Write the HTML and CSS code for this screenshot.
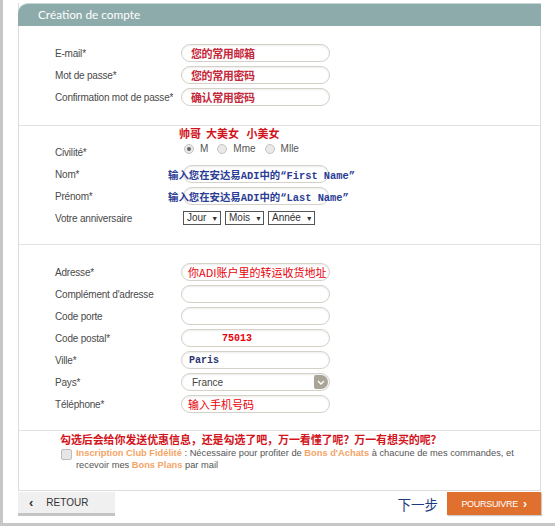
FILE: index.html
```html
<!doctype html>
<html>
  <head>
    <meta charset="UTF-8" />
    <title>Création de compte</title>
    <link rel="stylesheet" href="styles.css">
  </head>
  <body>
    <div id="page">
      <div id="panel">
        <div class="head">Création de compte</div>

        <!-- identifiants -->
        <div class="section s1">
          <div class="row">
            <span class="label">E-mail*</span>
            <div class="field"><span class="hint-red">您的常用邮箱</span></div>
          </div>
          <div class="row">
            <span class="label">Mot de passe*</span>
            <div class="field"><span class="hint-red">您的常用密码</span></div>
          </div>
          <div class="row">
            <span class="label">Confirmation mot de passe*</span>
            <div class="field"><span class="hint-red">确认常用密码</span></div>
          </div>
        </div>

        <!-- identite -->
        <div class="section s2">
          <div class="note">帅哥&nbsp;&nbsp;大美女&nbsp;&nbsp;&nbsp;小美女</div>
          <div class="row">
            <span class="label">Civilité*</span>
            <div class="radios">
              <span class="radio checked"></span><span class="rlabel">M</span>
              <span class="radio"></span><span class="rlabel">Mme</span>
              <span class="radio"></span><span class="rlabel">Mlle</span>
            </div>
          </div>
          <div class="row">
            <span class="label">Nom*</span>
            <div class="field narrow"><span class="hint-blue">输入您在安达易ADI中的“First Name”</span></div>
          </div>
          <div class="row">
            <span class="label">Prénom*</span>
            <div class="field narrow"><span class="hint-blue">输入您在安达易ADI中的“Last Name”</span></div>
          </div>
          <div class="row">
            <span class="label">Votre anniversaire</span>
            <div class="selects">
              <span class="sel w1">Jour <i>▼</i></span>
              <span class="sel w2">Mois <i>▼</i></span>
              <span class="sel w3">Année <i>▼</i></span>
            </div>
          </div>
        </div>

        <!-- adresse -->
        <div class="section s3">
          <div class="row">
            <span class="label">Adresse*</span>
            <div class="field"><span class="hint-addr">你ADI账户里的转运收货地址</span></div>
          </div>
          <div class="row">
            <span class="label">Complément d'adresse</span>
            <div class="field"></div>
          </div>
          <div class="row">
            <span class="label">Code porte</span>
            <div class="field"></div>
          </div>
          <div class="row">
            <span class="label">Code postal*</span>
            <div class="field"><span class="mono red zip">75013</span></div>
          </div>
          <div class="row">
            <span class="label">Ville*</span>
            <div class="field"><span class="mono navy">Paris</span></div>
          </div>
          <div class="row">
            <span class="label">Pays*</span>
            <div class="field dropdown">
              <span class="country">France</span>
              <span class="drop-btn">
                <svg width="8" height="5" viewBox="0 0 8 5"><path d="M1 1 L4 4 L7 1" fill="none" stroke="#fff" stroke-width="1.4"/></svg>
              </span>
            </div>
          </div>
          <div class="row">
            <span class="label">Téléphone*</span>
            <div class="field"><span class="hint-addr">输入手机号码</span></div>
          </div>
        </div>

        <!-- newsletter -->
        <div class="section s4">
          <div class="promo">勾选后会给你发送优惠信息，还是勾选了吧，万一看懂了呢？万一有想买的呢？</div>
          <div class="club">
            <span class="check"></span>
            <p>
              <b>Inscription Club Fidélité</b> : Nécessaire pour profiter de <b>Bons d'Achats</b> à chacune de mes commandes, et recevoir mes <b>Bons Plans</b> par mail
            </p>
          </div>
        </div>
      </div>

      <div class="actions">
        <a class="back"><span class="chev">‹</span>RETOUR</a>
        <div class="go">
          <span class="next">下一步</span>
          <a class="submit">POURSUIVRE <span class="chev-r">›</span></a>
        </div>
      </div>
    </div>
  </body>
</html>
```

FILE: styles.css
```css
* {
  padding: 0px;
  margin: 0px;
  text-decoration: none;
}
body {
  background: #fff;
  font-family: "Liberation Sans", Arial, sans-serif;
  color: #4a4a4a;
}
#page {
  height: 526px;
  box-sizing: border-box;
  border-left: 3px solid #c6c6c6;
  border-bottom: 3px solid #c6c6c6;
  padding: 3px 0 0 15px;
}
#panel {
  width: 523px;
  box-sizing: border-box;
  border-left: 1px solid #dcdcdc;
  border-right: 1px solid #dcdcdc;
  border-bottom: 1px solid #dcdcdc;
}
.head {
  height: 23px;
  margin: 0 -1px;
  background: #8eabab;
  border-top: 1px solid #c9d6d6;
  border-radius: 10px 0 0 0;
  box-sizing: border-box;
  color: #fff;
  font-family: Lato, "Liberation Sans", sans-serif;
  font-size: 11.8px;
  line-height: 21px;
  padding-left: 20px;
}
.section {
  padding-left: 36px;
  border-bottom: 1px solid #e2e2e2;
}
.s1 {
  padding-top: 16px;
  padding-bottom: 17px;
}
.s2 {
  padding-bottom: 15px;
}
.s3 {
  padding-top: 16px;
  padding-bottom: 15px;
}
.s4 {
  height: 59px;
  border-bottom: none;
  padding-left: 41px;
}
.row {
  display: flex;
  align-items: center;
  height: 22px;
}
.label {
  width: 126px;
  font-size: 10px;
  letter-spacing: -0.2px;
  flex: none;
}
.field {
  width: 149px;
  height: 18px;
  box-sizing: border-box;
  border: 1px solid #d4d1c8;
  border-radius: 9px;
  box-shadow: inset 0 1px 2px rgba(0, 0, 0, 0.08);
  display: flex;
  align-items: center;
  padding-left: 6px;
  white-space: nowrap;
}
.field.narrow {
  width: 146px;
  margin-left: 2px;
}
.hint-red {
  margin-left: 3px;
  color: #c4283a;
  font-family: "Noto Sans CJK SC", sans-serif;
  font-size: 11px;
  font-weight: bold;
  letter-spacing: -0.4px;
}
.hint-blue {
  margin-left: -22px;
  color: #2a3c94;
  font-family: "Liberation Mono", "Noto Sans CJK SC", monospace;
  font-size: 10.4px;
  font-weight: bold;
}
.hint-addr {
  color: #e8000b;
  font-family: "Noto Sans CJK SC", sans-serif;
  font-size: 11px;
}
.mono {
  font-family: "Liberation Mono", monospace;
  font-size: 10px;
  font-weight: bold;
}
.red {
  color: #e8000b;
}
.zip {
  margin-left: 34px;
}
.navy {
  color: #2b3570;
  margin-left: 1px;
}
.dropdown {
  padding-left: 10px;
  padding-right: 1px;
  justify-content: space-between;
}
.country {
  font-size: 10px;
  color: #444;
}
.drop-btn {
  width: 14px;
  height: 14px;
  background: #a9a497;
  border-radius: 2px 7px 7px 2px;
  display: flex;
  align-items: center;
  justify-content: center;
}
.note {
  height: 15px;
  line-height: 15px;
  padding-left: 124px;
  color: #d2141c;
  font-family: "Noto Sans CJK SC", serif;
  font-size: 11px;
  font-weight: bold;
}
.radios {
  display: flex;
  align-items: center;
  padding-left: 3px;
  padding-bottom: 7px;
  font-size: 10px;
  color: #555;
}
.radio {
  width: 8px;
  height: 8px;
  border: 1px solid #c3c3c3;
  border-radius: 50%;
  background: #e9e9e9;
  position: relative;
}
.radio.checked::after {
  content: "";
  position: absolute;
  left: 2px;
  top: 2px;
  width: 4px;
  height: 4px;
  border-radius: 50%;
  background: #666;
}
.rlabel {
  margin: 0 9px 0 6px;
}
.selects {
  display: flex;
  gap: 4px;
  padding-left: 2px;
}
.sel {
  height: 14px;
  box-sizing: border-box;
  border: 1px solid #555;
  font-size: 10px;
  line-height: 12px;
  padding-left: 3px;
  color: #333;
}
.sel i {
  font-style: normal;
  font-size: 7px;
  margin-left: 2px;
}
.w1 {
  width: 38px;
}
.w2 {
  width: 39px;
}
.w3 {
  width: 47px;
}
.promo {
  padding-top: 1px;
  height: 14px;
  line-height: 14px;
  color: #d2141c;
  font-family: "Noto Sans CJK SC", serif;
  font-size: 11px;
  font-weight: bold;
  letter-spacing: -0.1px;
}
.club {
  display: flex;
  align-items: flex-start;
  margin-top: 1px;
}
.check {
  flex: none;
  width: 9px;
  height: 9px;
  margin: 2px 0 0 1px;
  border: 1px solid #bdbdbd;
  border-radius: 2px;
  background: #e6e6e6;
}
.club p {
  width: 445px;
  margin-left: 4px;
  font-size: 9.3px;
  line-height: 12px;
  color: #555;
}
.club b {
  color: #f4a466;
}
.actions {
  display: flex;
  justify-content: space-between;
  align-items: flex-start;
  width: 523px;
  padding-top: 1px;
}
.back {
  width: 97px;
  height: 24px;
  box-sizing: border-box;
  background: #f0f0f0;
  border-bottom: 3px solid #c4c4c4;
  display: flex;
  align-items: center;
  font-family: "Liberation Sans", sans-serif;
  font-size: 10px;
  color: #333;
  padding-left: 11px;
}
.chev {
  font-weight: bold;
  font-size: 13px;
  margin-right: 13px;
}
.go {
  display: flex;
  align-items: center;
}
.next {
  color: #1d3b7c;
  font-family: "Noto Sans CJK SC", sans-serif;
  font-size: 13.5px;
  margin-right: 9px;
}
.submit {
  width: 94px;
  height: 23px;
  background: #e0702e;
  box-shadow: 1px 1px 1px rgba(0, 0, 0, 0.2);
  color: #fff;
  font-size: 9px;
  letter-spacing: -0.3px;
  display: flex;
  align-items: center;
  justify-content: center;
}
.chev-r {
  font-weight: bold;
  font-size: 12px;
  margin-left: 5px;
}
```
